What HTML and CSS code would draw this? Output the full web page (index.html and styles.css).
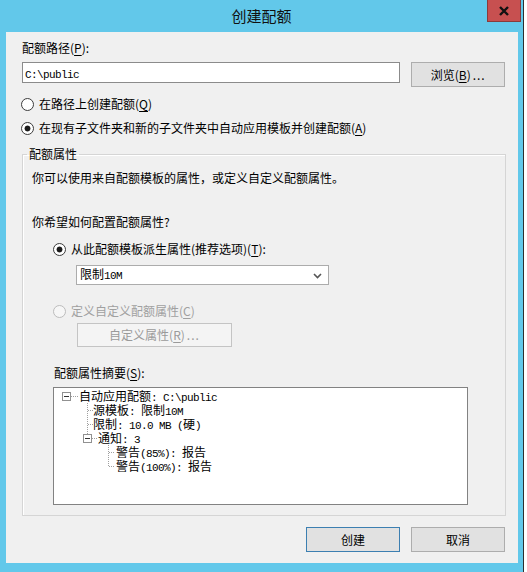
FILE: index.html
```html
<!DOCTYPE html>
<html lang="zh-CN">
<head>
<meta charset="utf-8">
<title>创建配额</title>
<link rel="stylesheet" href="styles.css">
</head>
<body>
<div class="window">
  <div class="titlebar">
    <div class="title">创建配额</div>
    <div class="close">
      <svg width="12" height="10" viewBox="0 0 12 10"><path d="M2 1 L10 9 M10 1 L2 9" stroke="#111" stroke-width="2.4" fill="none"/></svg>
    </div>
  </div>
  <div class="client">
    <div class="lbl-path">配额路径(<u>P</u>):</div>
    <div class="path-row">
      <div class="textbox"><span class="m">C:\public</span></div>
      <div class="btn btn-browse">浏览(<u>B</u>)<span class="dots">...</span></div>
    </div>
    <div class="radio-row r1"><span class="radio"></span><span>在路径上创建配额(<u>Q</u>)</span></div>
    <div class="radio-row r2"><span class="radio checked"></span><span>在现有子文件夹和新的子文件夹中自动应用模板并创建配额(<u>A</u>)</span></div>
    <fieldset class="group">
      <legend>配额属性</legend>
      <div class="group-body">
        <div class="desc">你可以使用来自配额模板的属性，或定义自定义配额属性。</div>
        <div class="question">你希望如何配置配额属性?</div>
        <div class="radio-row r3"><span class="radio checked"></span><span>从此配额模板派生属性(推荐选项)(<u>T</u>):</span></div>
        <div class="combo">
          <span>限制<span class="m">10M</span></span>
          <svg class="arrow" width="9" height="6" viewBox="0 0 9 6"><path d="M1 1 L4.5 4.5 L8 1" stroke="#555" stroke-width="1.6" fill="none"/></svg>
        </div>
        <div class="radio-row r4 disabled"><span class="radio"></span><span>定义自定义配额属性(<u>C</u>)</span></div>
        <div class="btn btn-custom disabled">自定义属性(<u>R</u>)<span class="dots">...</span></div>
        <div class="summary-label">配额属性摘要(<u>S</u>):</div>
        <div class="tree">
          <svg class="tree-lines" width="80" height="90" viewBox="0 0 80 90" shape-rendering="crispEdges">
            <g stroke="#a0a0a0" stroke-width="1" stroke-dasharray="1 1" fill="none">
              <path d="M17 8.5 H24"/>
              <path d="M33.5 15 V46"/>
              <path d="M34 22.5 H39"/>
              <path d="M34 36.5 H39"/>
              <path d="M38 50.5 H43"/>
              <path d="M54.5 57 V78"/>
              <path d="M55 64.5 H61"/>
              <path d="M55 78.5 H61"/>
            </g>
            <g fill="#fff" stroke="#919191" stroke-width="1">
              <rect x="8.5" y="4.5" width="8" height="8"/>
              <rect x="29.5" y="46.5" width="8" height="8"/>
            </g>
            <g stroke="#333" stroke-width="1">
              <path d="M10 8.5 H15"/>
              <path d="M31 50.5 H36"/>
            </g>
          </svg>
          <div class="node n0">自动应用配额<span class="m">: C:\public</span></div>
          <div class="node n1">源模板<span class="m">: </span>限制<span class="m">10M</span></div>
          <div class="node n1">限制<span class="m">: 10.0 MB (</span>硬<span class="m">)</span></div>
          <div class="node n1b">通知<span class="m">: 3</span></div>
          <div class="node n2">警告<span class="m">(85%): </span>报告</div>
          <div class="node n2">警告<span class="m">(100%): </span>报告</div>
        </div>
      </div>
    </fieldset>
    <div class="footer">
      <div class="btn btn-default">创建</div>
      <div class="btn">取消</div>
    </div>
  </div>
</div>
</body>
</html>
```

FILE: styles.css
```css
* { box-sizing: border-box; }
html, body { margin: 0; padding: 0; }
body {
  width: 527px;
  height: 572px;
  overflow: hidden;
  background: #ffffff;
  font-family: "Noto Sans CJK SC", "Microsoft YaHei", sans-serif;
  font-size: 12px;
  line-height: 16px;
  color: #000;
}
u { text-decoration: underline; text-underline-offset: 2px; }
.m {
  font-family: "Liberation Mono", monospace;
  font-size: 11px;
  letter-spacing: -0.6px;
}
.window {
  width: 524px;
  height: 572px;
  background: #62c8ea;
  border-right: 1px solid #2e2e2e;
  display: flex;
  flex-direction: column;
}
.titlebar {
  height: 32px;
  display: grid;
  grid-template-columns: 1fr auto 1fr;
  align-items: start;
  flex: none;
}
.title {
  grid-column: 2;
  font-size: 15px;
  line-height: 20px;
  padding-top: 6px;
  color: #111;
}
.close {
  grid-column: 3;
  justify-self: end;
  margin-right: 2px;
  width: 34px;
  height: 22px;
  background: #c75050;
  border: 1px solid #8a3b3b;
  border-top: none;
  display: flex;
  align-items: center;
  justify-content: center;
}
.client {
  margin-left: 6px;
  width: 512px;
  height: 531px;
  background: #f0f0f0;
  padding: 8px 13px 11px 16px;
  display: flex;
  flex-direction: column;
}
.lbl-path { height: 16px; }
.path-row {
  display: flex;
  align-items: flex-start;
  margin-top: 6px;
}
.textbox {
  width: 380px;
  height: 21px;
  background: #fff;
  border: 1px solid #8b8b8b;
  padding: 1px 2px;
  line-height: 17px;
}
.btn {
  height: 25px;
  width: 94px;
  background: #e1e1e1;
  border: 1px solid #adadad;
  display: flex;
  align-items: center;
  justify-content: center;
  line-height: 16px;
}
.btn .dots { letter-spacing: 1px; margin-left: 2px; }
.btn-browse { margin-left: 11px; }
.radio-row {
  display: flex;
  align-items: center;
  height: 16px;
  gap: 5px;
}
.radio {
  width: 13px;
  height: 13px;
  border-radius: 50%;
  border: 1px solid #3c3c3c;
  background: #fff;
  flex: none;
}
.radio.checked {
  background: radial-gradient(circle, #1a1a1a 0 2.6px, #fff 3.3px);
}
.r1 { margin-top: 9px; margin-left: -1px; }
.r2 { margin-top: 8px; margin-left: -1px; }
.group {
  margin: 10px 0 0 0;
  padding: 0;
  width: 484px;
  min-width: 0;
  border: 1px solid #d5d5d5;
  box-shadow: inset 1px 1px 0 #fff;
}
.group legend {
  margin-left: 4px;
  padding: 0 2px;
  line-height: 16px;
}
.group-body {
  padding: 0 0 10px 9px;
  display: flex;
  flex-direction: column;
  align-items: flex-start;
}
.desc { margin-top: 8px; }
.question { margin-top: 28px; }
.r3 { margin-top: 11px; margin-left: 21px; gap: 5px; }
.combo {
  margin-top: 8px;
  margin-left: 44px;
  width: 253px;
  height: 20px;
  background: #fff;
  border: 1px solid #acacac;
  display: flex;
  align-items: center;
  justify-content: space-between;
  padding: 0 6px 0 3px;
}
.combo .arrow { margin-top: 1px; }
.r4 { margin-top: 18px; margin-left: 21px; }
.disabled { color: #a0a0a0; }
.disabled .radio { border-color: #bcbcbc; background: #f6f6f6; }
.btn-custom {
  margin-top: 4px;
  margin-left: 45px;
  width: 155px;
  height: 24px;
  background: #f4f4f4;
  border-color: #c4c4c4;
  color: #9a9a9a;
}
.summary-label { margin-top: 18px; margin-left: 22px; }
.tree {
  position: relative;
  margin-top: 6px;
  margin-left: 21px;
  width: 415px;
  height: 118px;
  background: #fff;
  border: 1px solid #828282;
  padding-top: 1px;
}
.tree-lines { position: absolute; left: 0; top: 0; }
.node { height: 14px; line-height: 14px; white-space: nowrap; }
.n0 { padding-left: 25px; }
.n1 { padding-left: 39px; }
.n1b { padding-left: 44px; }
.n2 { padding-left: 62px; }
.footer {
  margin-top: 11px;
  display: flex;
  justify-content: flex-end;
  gap: 11px;
}
.btn-default { border-color: #3c7fb1; }
```
